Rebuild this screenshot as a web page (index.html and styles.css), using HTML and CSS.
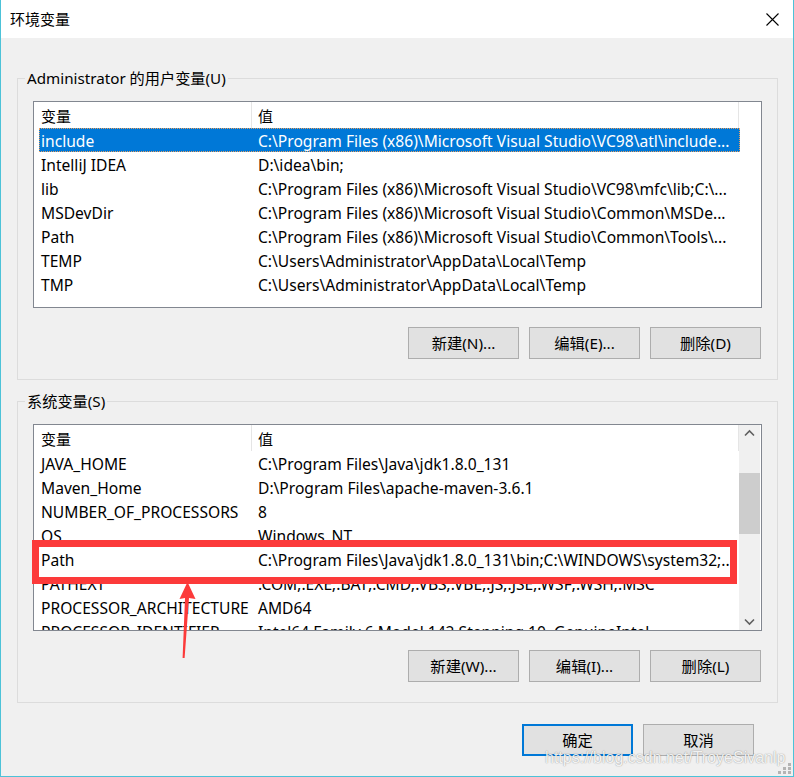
FILE: index.html
```html
<!DOCTYPE html>
<html lang="zh-CN">
<head>
<meta charset="utf-8">
<title>环境变量</title>
<link rel="stylesheet" href="styles.css">
</head>
<body>
<div class="window">
  <div class="titlebar">
    <span class="title">环境变量</span>
    <svg class="close" width="13" height="13" viewBox="0 0 13 13"><path d="M0.5 0.5 L12.5 12.5 M12.5 0.5 L0.5 12.5" stroke="#000" stroke-width="1.1" fill="none"/></svg>
  </div>
  <div class="content">
    <div class="group">
      <span class="group-title">Administrator 的用户变量(U)</span>
      <div class="list">
        <div class="list-main">
          <div class="list-head">
            <div class="hcol hcol1">变量</div>
            <div class="hcol hcol2">值</div>
          </div>
          <div class="row selected"><div class="c1">include</div><div class="c2">C:\Program Files (x86)\Microsoft Visual Studio\VC98\atl\include...</div></div>
          <div class="row"><div class="c1">IntelliJ IDEA</div><div class="c2">D:\idea\bin;</div></div>
          <div class="row"><div class="c1">lib</div><div class="c2">C:\Program Files (x86)\Microsoft Visual Studio\VC98\mfc\lib;C:\...</div></div>
          <div class="row"><div class="c1">MSDevDir</div><div class="c2">C:\Program Files (x86)\Microsoft Visual Studio\Common\MSDe...</div></div>
          <div class="row"><div class="c1">Path</div><div class="c2">C:\Program Files (x86)\Microsoft Visual Studio\Common\Tools\...</div></div>
          <div class="row"><div class="c1">TEMP</div><div class="c2">C:\Users\Administrator\AppData\Local\Temp</div></div>
          <div class="row"><div class="c1">TMP</div><div class="c2">C:\Users\Administrator\AppData\Local\Temp</div></div>
        </div>
      </div>
      <div class="buttons">
        <button class="btn">新建(N)...</button>
        <button class="btn">编辑(E)...</button>
        <button class="btn">删除(D)</button>
      </div>
    </div>

    <div class="group group2">
      <span class="group-title">系统变量(S)</span>
      <div class="list">
        <div class="list-main">
          <div class="list-head">
            <div class="hcol hcol1">变量</div>
            <div class="hcol hcol2">值</div>
          </div>
          <div class="row"><div class="c1">JAVA_HOME</div><div class="c2">C:\Program Files\Java\jdk1.8.0_131</div></div>
          <div class="row"><div class="c1">Maven_Home</div><div class="c2">D:\Program Files\apache-maven-3.6.1</div></div>
          <div class="row"><div class="c1">NUMBER_OF_PROCESSORS</div><div class="c2">8</div></div>
          <div class="row"><div class="c1">OS</div><div class="c2">Windows_NT</div></div>
          <div class="row"><div class="c1">Path</div><div class="c2">C:\Program Files\Java\jdk1.8.0_131\bin;C:\WINDOWS\system32;...</div></div>
          <div class="row"><div class="c1">PATHEXT</div><div class="c2">.COM;.EXE;.BAT;.CMD;.VBS;.VBE;.JS;.JSE;.WSF;.WSH;.MSC</div></div>
          <div class="row"><div class="c1">PROCESSOR_ARCHITECTURE</div><div class="c2">AMD64</div></div>
          <div class="row"><div class="c1">PROCESSOR_IDENTIFIER</div><div class="c2">Intel64 Family 6 Model 142 Stepping 10, GenuineIntel</div></div>
        </div>
        <div class="scrollbar">
          <svg class="sb-arrow" width="21" height="17" viewBox="0 0 21 17"><path d="M6 10.5 L10.5 6 L15 10.5" stroke="#606060" stroke-width="1.6" fill="none"/></svg>
          <div class="sb-track"><div class="sb-thumb"></div></div>
          <svg class="sb-arrow" width="21" height="17" viewBox="0 0 21 17"><path d="M6 6.5 L10.5 11 L15 6.5" stroke="#606060" stroke-width="1.6" fill="none"/></svg>
        </div>
      </div>
      <div class="buttons">
        <button class="btn">新建(W)...</button>
        <button class="btn">编辑(I)...</button>
        <button class="btn">删除(L)</button>
      </div>
    </div>

    <div class="footer">
      <button class="btn btn-default">确定</button>
      <button class="btn">取消</button>
    </div>
  </div>

  <div class="highlight"></div>
  <svg class="arrow" width="20" height="80" viewBox="0 0 20 80"><polygon points="9.5,2 17.5,19 11,18 6.6,78 4.6,78 7,18 1.5,19" fill="#fc3a3a"/></svg>
  <span class="watermark">https://blog.csdn.net/TroyeSivanlp</span>
  <svg class="grip" width="14" height="14" viewBox="0 0 14 14">
    <rect x="10" y="2" width="3" height="3" fill="#b4b4b4"/>
    <rect x="5" y="6" width="3" height="3" fill="#b4b4b4"/>
    <rect x="10" y="6" width="3" height="3" fill="#b4b4b4"/>
    <rect x="0" y="10" width="3" height="3" fill="#b4b4b4"/>
    <rect x="5" y="10" width="3" height="3" fill="#b4b4b4"/>
    <rect x="10" y="10" width="3" height="3" fill="#b4b4b4"/>
  </svg>
</div>
</body>
</html>
```

FILE: styles.css
```css
* { box-sizing: border-box; }
html, body { margin: 0; padding: 0; }
body {
  width: 794px;
  height: 777px;
  overflow: hidden;
  font-family: "Noto Sans", "Noto Sans CJK SC", sans-serif;
  font-size: 15px;
  color: #000;
}
.window {
  position: relative;
  width: 794px;
  height: 777px;
  background: #f0f0f0;
  border-left: 1px solid #4cc2d8;
  border-right: 1px solid #4cc2d8;
  border-bottom: 1px solid #4cc2d8;
}
.titlebar {
  height: 38px;
  background: #fff;
  display: flex;
  align-items: center;
  justify-content: space-between;
  padding: 0 14px 0 9px;
}
.title { line-height: 20px; }
.content {
  padding: 40px 15px 0 16px;
  display: flex;
  flex-direction: column;
}
.group {
  position: relative;
  border: 1px solid #dcdcdc;
  padding: 22px 15px 20px 15px;
}
.group2 { margin-top: 21px; }
.group-title {
  position: absolute;
  top: -11px;
  left: 7px;
  padding: 0 2px;
  line-height: 20px;
  font-size: 15.2px;
  background: #f0f0f0;
}
.list {
  height: 207px;
  border: 1px solid #828790;
  background: #fff;
  display: flex;
  overflow: hidden;
}
.list-main {
  flex: 1;
  min-width: 0;
  overflow: hidden;
}
.list-head {
  display: flex;
  height: 26px;
}
.hcol {
  height: 26px;
  padding-top: 4px;
  line-height: 20px;
}
.hcol1 { width: 218px; padding-left: 7px; border-right: 1px solid #e5e5e5; }
.hcol2 { width: 487px; padding-left: 6px; border-right: 1px solid #e5e5e5; }
.row {
  display: flex;
  height: 24px;
  width: 701px;
  margin-left: 5px;
  padding-top: 3px;
  line-height: 20px;
  font-size: 15.6px;
  white-space: nowrap;
}
.row .c1 { width: 213px; padding-left: 2px; overflow: hidden; }
.row .c2 { flex: 1; padding-left: 6px; overflow: hidden; }
.row.selected {
  background: #0078d7;
  color: #fff;
  outline: 1px dotted #e8a060;
  outline-offset: -1px;
}
.scrollbar {
  width: 21px;
  margin-right: 1px;
  background: #f0f0f0;
  display: flex;
  flex-direction: column;
}
.sb-arrow { display: block; flex: none; }
.sb-track { flex: 1; padding-top: 31px; }
.sb-thumb { height: 61px; background: #cdcdcd; }
.buttons {
  display: flex;
  justify-content: flex-end;
  gap: 10px;
  margin-top: 19px;
  padding-right: 1px;
}
.btn {
  width: 111px;
  height: 32px;
  margin: 0;
  padding: 0;
  background: #e1e1e1;
  border: 1px solid #adadad;
  font-family: "Noto Sans", "Noto Sans CJK SC", sans-serif;
  font-size: 15.3px;
  color: #000;
  line-height: 20px;
}
.btn-default { border: 2px solid #0078d7; }
.footer {
  display: flex;
  justify-content: flex-end;
  gap: 10px;
  margin-top: 21px;
  padding-right: 24px;
}
.highlight {
  position: absolute;
  left: 31px;
  top: 540px;
  width: 705px;
  height: 44px;
  border: 7px solid #fc3a3a;
}
.arrow {
  position: absolute;
  left: 177px;
  top: 580px;
}
.watermark {
  position: absolute;
  left: 544px;
  top: 748px;
  font-family: "Liberation Sans", sans-serif;
  font-size: 16px;
  line-height: 20px;
  color: rgba(255, 255, 255, 0.9);
  text-shadow: 0 0 1px rgba(0, 0, 0, 0.35), 0 0 2px rgba(0, 0, 0, 0.15);
}
.grip {
  position: absolute;
  right: 1px;
  bottom: 1px;
}
.close { display: block; }
```
